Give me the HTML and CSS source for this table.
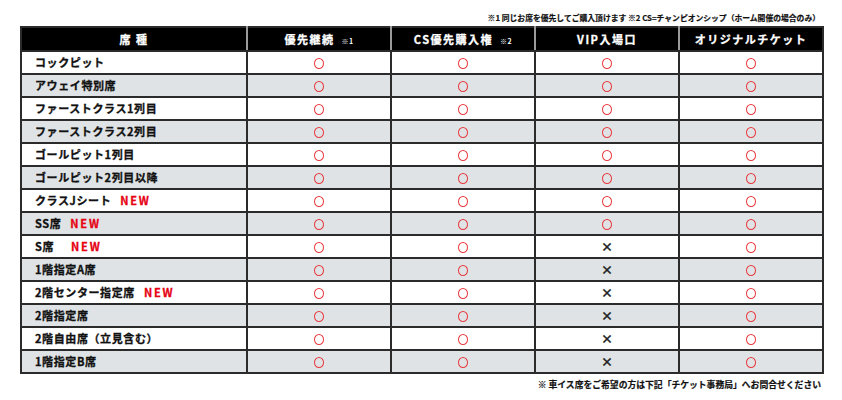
FILE: index.html
```html
<!DOCTYPE html>
<html lang="ja">
<head>
<meta charset="utf-8">
<link rel="stylesheet" href="styles.css">
</head>
<body>
<div class="page">
  <p class="note-top">※1 同じお席を優先してご購入頂けます ※2 CS=チャンピオンシップ（ホーム開催の場合のみ）</p>
  <table class="seats">
    <colgroup>
      <col class="c-name"><col class="c-val"><col class="c-val"><col class="c-val"><col class="c-val">
    </colgroup>
    <thead>
      <tr>
        <th>席 種</th>
        <th>優先継続 <small>※1</small></th>
        <th>CS優先購入権 <small>※2</small></th>
        <th>VIP入場口</th>
        <th>オリジナルチケット</th>
      </tr>
    </thead>
    <tbody>
      <tr><td>コックピット</td><td><i class="ok"></i></td><td><i class="ok"></i></td><td><i class="ok"></i></td><td><i class="ok"></i></td></tr>
      <tr><td>アウェイ特別席</td><td><i class="ok"></i></td><td><i class="ok"></i></td><td><i class="ok"></i></td><td><i class="ok"></i></td></tr>
      <tr><td>ファーストクラス1列目</td><td><i class="ok"></i></td><td><i class="ok"></i></td><td><i class="ok"></i></td><td><i class="ok"></i></td></tr>
      <tr><td>ファーストクラス2列目</td><td><i class="ok"></i></td><td><i class="ok"></i></td><td><i class="ok"></i></td><td><i class="ok"></i></td></tr>
      <tr><td>ゴールピット1列目</td><td><i class="ok"></i></td><td><i class="ok"></i></td><td><i class="ok"></i></td><td><i class="ok"></i></td></tr>
      <tr><td>ゴールピット2列目以降</td><td><i class="ok"></i></td><td><i class="ok"></i></td><td><i class="ok"></i></td><td><i class="ok"></i></td></tr>
      <tr><td>クラスJシート<span class="new">NEW</span></td><td><i class="ok"></i></td><td><i class="ok"></i></td><td><i class="ok"></i></td><td><i class="ok"></i></td></tr>
      <tr><td>SS席<span class="new">NEW</span></td><td><i class="ok"></i></td><td><i class="ok"></i></td><td><i class="ok"></i></td><td><i class="ok"></i></td></tr>
      <tr><td>S席<span class="new new-wide">NEW</span></td><td><i class="ok"></i></td><td><i class="ok"></i></td><td><span class="ng">×</span></td><td><i class="ok"></i></td></tr>
      <tr><td>1階指定A席</td><td><i class="ok"></i></td><td><i class="ok"></i></td><td><span class="ng">×</span></td><td><i class="ok"></i></td></tr>
      <tr><td>2階センター指定席<span class="new">NEW</span></td><td><i class="ok"></i></td><td><i class="ok"></i></td><td><span class="ng">×</span></td><td><i class="ok"></i></td></tr>
      <tr><td>2階指定席</td><td><i class="ok"></i></td><td><i class="ok"></i></td><td><span class="ng">×</span></td><td><i class="ok"></i></td></tr>
      <tr><td>2階自由席（立見含む）</td><td><i class="ok"></i></td><td><i class="ok"></i></td><td><span class="ng">×</span></td><td><i class="ok"></i></td></tr>
      <tr><td>1階指定B席</td><td><i class="ok"></i></td><td><i class="ok"></i></td><td><span class="ng">×</span></td><td><i class="ok"></i></td></tr>
    </tbody>
  </table>
  <p class="note-bottom">※ 車イス席をご希望の方は下記「チケット事務局」へお問合せください</p>
</div>
</body>
</html>
```

FILE: styles.css
```css
html, body {
  margin: 0;
  padding: 0;
  background: #fff;
}
body {
  font-family: "Noto Sans CJK JP", "Noto Sans", sans-serif;
  color: #111;
}
.page {
  width: 842px;
  padding: 13px 20px 0 20px;
  box-sizing: border-box;
}
.note-top {
  margin: 0 0 3px 0;
  text-align: right;
  font-size: 7.8px;
  font-weight: 700;
  -webkit-text-stroke: 0.2px #111;
  line-height: 10px;
  padding-right: 2px;
}
.seats {
  width: 802px;
  border-collapse: collapse;
  table-layout: fixed;
  border: 2px solid #2b2b2b;
}
.c-name { width: 226px; }
.c-val { width: 144px; }
.seats th {
  background: #000;
  color: #fff;
  height: 22px;
  padding: 0;
  font-size: 11px;
  font-weight: 700;
  -webkit-text-stroke: 0.3px #fff;
  letter-spacing: 1.5px;
  text-align: center;
  border-left: 2px solid #9a9a9a;
  border-bottom: 2px solid #2b2b2b;
  line-height: 1;
}
.seats th:first-child { border-left: none; }
.seats th small {
  font-size: 7px;
  letter-spacing: 0.5px;
  margin-left: 3px;
  -webkit-text-stroke: 0;
}
.seats td {
  height: 21px;
  padding: 0;
  border: 2px solid #2b2b2b;
  text-align: center;
  line-height: 1;
  font-size: 11px;
  font-weight: 700;
}
.seats td:first-child {
  text-align: left;
  padding-left: 13px;
  letter-spacing: 0.6px;
  -webkit-text-stroke: 0.3px #111;
}
.seats tbody tr:nth-child(even) td {
  background: #dfe3e5;
}
.new {
  color: #e60012;
  -webkit-text-stroke: 0.3px #e60012;
  letter-spacing: 1.8px;
  margin-left: 9px;
}
.new-wide { margin-left: 17px; }
.ok {
  display: inline-block;
  width: 8px;
  height: 9px;
  border: 1.5px solid #e8383d;
  border-radius: 50%;
  vertical-align: middle;
}
.ng {
  font-size: 12px;
  font-weight: 700;
  -webkit-text-stroke: 0.3px #222;
  color: #222;
}
.note-bottom {
  margin: 5px 0 0 0;
  text-align: right;
  font-size: 8.8px;
  font-weight: 700;
  -webkit-text-stroke: 0.2px #111;
  line-height: 12px;
  padding-right: 1px;
}
```
